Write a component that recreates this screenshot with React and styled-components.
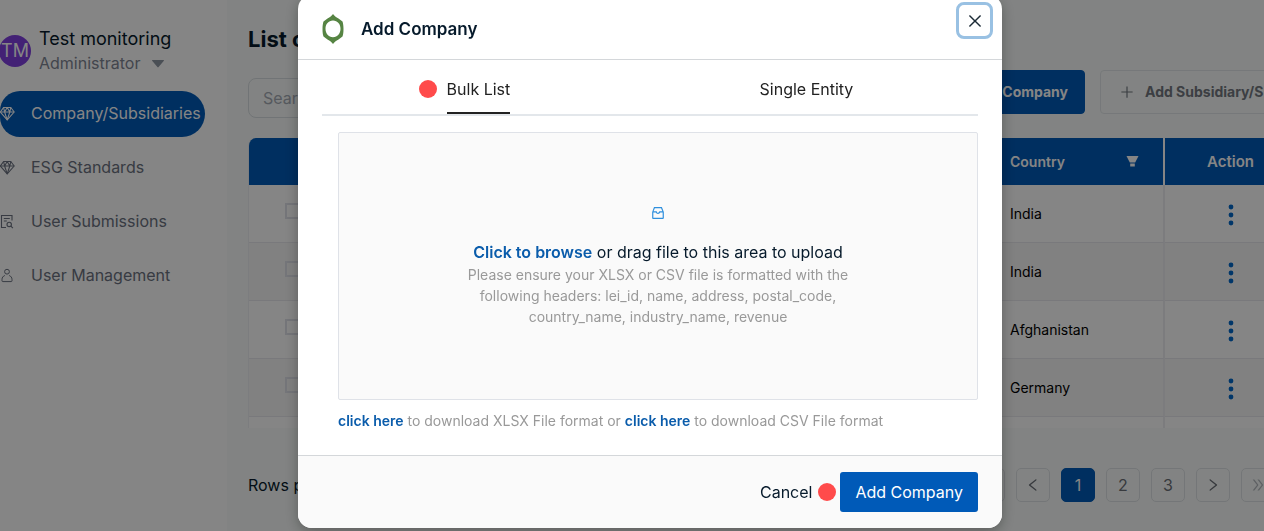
import React from "react";
import styled, { createGlobalStyle, css } from "styled-components";
import {
  AiOutlineInbox,
  AiOutlinePlus,
  AiOutlineLeft,
  AiOutlineRight,
  AiOutlineDoubleLeft,
  AiOutlineDoubleRight,
  AiOutlineClose,
} from "react-icons/ai";

const GlobalStyle = createGlobalStyle`
  *, *::before, *::after { box-sizing: border-box; }
  body {
    margin: 0;
    font-family: Inter, "Liberation Sans", sans-serif;
    font-size: 16px;
    line-height: 24px;
    color: #061a2b;
  }
  button, input { font: inherit; color: inherit; }
  p, h1, h2 { margin: 0; }
`;

const Viewport = styled.div`
  height: 100vh;
  overflow: hidden;
  background: #f9fcfb;
`;

const Shell = styled.div`
  display: flex;
  width: calc(100% + 34px);
  min-height: 100vh;
`;

const Sidebar = styled.aside`
  flex: none;
  width: 227px;
  padding-top: 26px;
  background: #fff;
`;

const Profile = styled.div`
  display: flex;
  align-items: center;
  gap: 8px;
`;

const Avatar = styled.span`
  flex: none;
  display: grid;
  place-items: center;
  width: 32px;
  height: 32px;
  margin-left: -1px;
  border-radius: 50%;
  background: #8040e0;
  color: #fff;
  font-size: 18px;
`;

const UserName = styled.p`
  font-size: 18px;
  line-height: 25px;
`;

const Role = styled.p`
  display: flex;
  align-items: center;
  gap: 12px;
  line-height: 25px;
  color: #7f8694;
`;

const Nav = styled.nav`
  display: flex;
  flex-direction: column;
  gap: 8px;
  margin-top: 15px;
`;

const NavLink = styled.a`
  display: flex;
  align-items: center;
  gap: 16px;
  width: 205px;
  height: 46px;
  padding-bottom: 2px;
  border-radius: 20px 23px 23px 20px;
  text-decoration: none;
  color: ${(p) => (p.$active ? "#fff" : "#6b7280")};
  background: ${(p) => (p.$active ? "#005ab8" : "transparent")};
  svg { flex: none; width: 15px; height: 15px; }
`;

const Main = styled.main`
  flex: 1;
  min-width: 0;
  padding: 24px 0 0 21px;
`;

const Toolbar = styled.div`
  display: flex;
  justify-content: space-between;
  align-items: flex-end;
`;

const PageTitle = styled.h1`
  font-size: 22px;
  line-height: 30px;
  font-weight: 700;
`;

const Search = styled.input`
  width: 280px;
  height: 40px;
  margin-top: 24px;
  padding: 0 14px;
  border: 1px solid #d9dfe3;
  border-radius: 8px;
  background: transparent;
  &::placeholder { color: #a5abb5; opacity: 1; }
`;

const Actions = styled.div`
  display: flex;
  gap: 15px;
  padding-bottom: 4px;
`;

const ToolButton = styled.button`
  display: flex;
  align-items: center;
  gap: 10px;
  height: 44px;
  padding: 0 16px;
  border-radius: 4px;
  font-size: 14px;
  font-weight: 700;
  white-space: nowrap;
  ${(p) =>
    p.$primary
      ? css`
          border: 1px solid #005ab8;
          background: #005ab8;
          color: #fff;
        `
      : css`
          width: 198px;
          padding-left: 18px;
          border: 1px solid #e3e7ea;
          background: transparent;
          color: #737880;
        `}
`;

const TableFrame = styled.div`
  height: 290px;
  margin-top: 20px;
  overflow: hidden;
  border-left: 1px solid #eef0f3;
  border-radius: 8px 0 0 0;
`;

const Table = styled.table`
  width: 100%;
  border-collapse: separate;
  border-spacing: 0;
  table-layout: fixed;
  font-size: 14px;
`;

const HeadCell = styled.th`
  height: 47px;
  width: ${(p) => p.$width || "auto"};
  padding: ${(p) => (p.$align === "center" ? "0" : "0 24px 0 8px")};
  background: #005ab8;
  color: #fff;
  font-weight: 600;
  font-size: ${(p) => (p.$align === "center" ? "15px" : "14px")};
  text-align: ${(p) => p.$align || "left"};
  border-right: 2px solid ${(p) => (p.$divided ? "#fff" : "#005ab8")};
`;

const HeadLabel = styled.span`
  display: flex;
  justify-content: space-between;
  align-items: center;
`;

const Row = styled.tr`
  background: ${(p) => (p.$striped ? "#f8f8f8" : "#fff")};
`;

const Cell = styled.td`
  height: 58px;
  padding: 0 8px;
  color: #000;
  border-right: 2px solid #eeeef2;
  border-bottom: 1px solid #e9e9ee;
  text-align: ${(p) => p.$align || "left"};
`;

const Check = styled.input`
  appearance: none;
  display: block;
  width: 16px;
  height: 16px;
  margin: 0 0 6px 28px;
  border: 2px solid #e0e2ea;
  background: transparent;
`;

const IconButton = styled.button`
  display: inline-grid;
  place-items: center;
  padding: 0;
  border: 0;
  background: none;
  color: #0068c9;
  vertical-align: middle;
`;

const Pager = styled.div`
  display: flex;
  align-items: center;
  justify-content: space-between;
  margin-top: 40px;
  padding-right: 23px;
`;

const Pages = styled.div`
  display: flex;
  gap: 11px;
`;

const PageButton = styled.button`
  display: grid;
  place-items: center;
  width: 34px;
  height: 34px;
  padding: 0;
  border: 1px solid ${(p) => (p.$active ? "#005ab8" : "#dfe2e6")};
  border-radius: 5px;
  background: ${(p) => (p.$active ? "#005ab8" : "transparent")};
  color: ${(p) => (p.$active ? "#fff" : p.$muted ? "#b4b8be" : "#6b6f77")};
`;

const Overlay = styled.div`
  position: fixed;
  inset: 0;
  display: flex;
  justify-content: center;
  align-items: flex-start;
  padding-left: 36px;
  overflow: hidden;
  background: rgba(0, 0, 0, 0.48);
`;

const Modal = styled.section`
  width: 704px;
  max-width: 100%;
  margin-top: -5px;
  border-radius: 14px;
  overflow: hidden;
  background: #fff;
  box-shadow: 0 4px 14px rgba(0, 0, 0, 0.3);
`;

const ModalHeader = styled.header`
  position: relative;
  display: flex;
  align-items: center;
  gap: 17px;
  height: 65px;
  padding: 3px 24px 0;
  border-bottom: 1px solid #d4d7da;
`;

const ModalTitle = styled.h2`
  font-size: 17px;
  font-weight: 600;
`;

const CloseButton = styled.button`
  position: absolute;
  top: 7px;
  right: 9px;
  display: grid;
  place-items: center;
  width: 37px;
  height: 37px;
  padding: 0;
  border: 3px solid #99c1e3;
  border-radius: 8px;
  background: #fff;
  color: #1c2b36;
`;

const ModalBody = styled.div`
  padding: 0 24px 24px;
`;

const Tabs = styled.div`
  display: flex;
  justify-content: space-around;
  height: 56px;
  border-bottom: 2px solid #e3e7eb;
`;

const Tab = styled.button`
  padding: 5px 0 0;
  border: 0;
  border-bottom: 2px solid ${(p) => (p.$active ? "#222" : "transparent")};
  background: none;
  color: #222;
`;

const Marked = styled.span`
  position: relative;
`;

const Marker = styled.i`
  position: absolute;
  top: 50%;
  right: calc(100% + ${(p) => p.$gap});
  width: 18px;
  height: 18px;
  margin-top: -9px;
  border-radius: 50%;
  background: #ff4b4b;
`;

const DropZone = styled.div`
  display: flex;
  flex-direction: column;
  align-items: center;
  height: 268px;
  margin: 16px 0 0 16px;
  padding-top: 72px;
  border: 1px solid #dfe2e8;
  border-radius: 2px;
  background: #fafafa;
  text-align: center;
`;

const DropTitle = styled.p`
  margin-top: 19px;
`;

const TextLink = styled.a`
  color: #0a5cab;
  font-weight: 600;
  text-decoration: none;
`;

const Hint = styled.p`
  font-size: 14px;
  line-height: 21px;
  color: #999;
`;

const Downloads = styled(Hint)`
  margin: 10px 0 0 16px;
`;

const ModalFooter = styled.footer`
  display: flex;
  justify-content: flex-end;
  align-items: center;
  gap: 28px;
  height: 73px;
  padding: 0 24px;
  border-top: 1px solid #d4d7da;
  background: #fafafa;
`;

const CancelButton = styled.button`
  padding: 0;
  border: 0;
  background: none;
`;

const SubmitButton = styled.button`
  position: relative;
  height: 40px;
  padding: 0 15px;
  border: 0;
  border-radius: 3px;
  background: #005ab8;
  color: #fff;
`;

const GemIcon = () => (
  <svg viewBox="0 0 15 15" fill="none" stroke="currentColor" strokeWidth="1.1" strokeLinejoin="round">
    <path d="M3.600 1.500h7.200L14.200 6 7.200 13.800.4 6z" />
    <path d="M.4 6h13.800M3.600 1.500L4.600 6l2.600 7.800L9.800 6l1-4.500M4.600 6l2.600-4.500L9.800 6" />
  </svg>
);

const FileSearchIcon = () => (
  <svg viewBox="0 0 15 15" fill="none" stroke="currentColor" strokeWidth="1.1">
    <path d="M6 13.500H1.500v-12h10.500V6.500" />
    <path d="M3.800 4.500h6M3.800 7h3" />
    <circle cx="9.200" cy="10.400" r="2.200" />
    <path d="M10.900 12.100l2 2" />
  </svg>
);

const PersonIcon = () => (
  <svg viewBox="0 0 15 15" fill="none" stroke="currentColor" strokeWidth="1">
    <circle cx="7" cy="3.700" r="2.400" />
    <path d="M4.800 7.500C3 8.200 2 9.600 2 11.500v1.300c0 .5.300.8.800.8h8.400c.5 0 .8-.3.800-.8v-1.300c0-1.900-1-3.300-2.800-4" />
  </svg>
);

const Caret = () => (
  <svg width="12" height="8" viewBox="0 0 12 8" fill="#8f97a3">
    <path d="M0.5 0h11a.5.5 0 0 1 .4.8L6.6 7.1a.8.8 0 0 1-1.2 0L.1.8A.5.5 0 0 1 .5 0z" />
  </svg>
);

const FunnelIcon = () => (
  <svg width="13" height="11" viewBox="0 0 13 11" fill="currentColor">
    <path d="M.5 0h12L9.200 6.500H3.800z" />
    <path d="M4.200 7.500h4.600v3H4.200z" />
  </svg>
);

const DotsIcon = () => (
  <svg width="6" height="22" viewBox="0 0 6 22" fill="currentColor">
    <circle cx="3" cy="3" r="2.4" />
    <circle cx="3" cy="11" r="2.4" />
    <circle cx="3" cy="19" r="2.4" />
  </svg>
);

const Logo = () => (
  <svg width="22" height="30" viewBox="0 0 22 30">
    <path
      fill="#568443"
      fillRule="evenodd"
      d="M11 0c1.300 2 3 3.200 5.500 4.500L20.500 7.500C21.200 9.500 21.500 12 21.500 15s-.3 5.500-1 7.500l-4 3C14 26.800 12.300 28 11 30c-1.300-2-3-3.200-5.500-4.500l-4-3C.8 20.500.5 18 .5 15s.3-5.500 1-7.500l4-3C8 3.200 9.700 2 11 0zM11 6.500c-4.500 0-7.500 3.600-7.500 8.300S6.500 23.200 11 23.200s7.500-3.700 7.500-8.400S15.500 6.500 11 6.500z"
    />
  </svg>
);

const navItems = [
  { label: "Company/Subsidiaries", Icon: GemIcon, active: true },
  { label: "ESG Standards", Icon: GemIcon },
  { label: "User Submissions", Icon: FileSearchIcon },
  { label: "User Management", Icon: PersonIcon },
];

const countries = ["India", "India", "Afghanistan", "Germany", ""];

export default function App() {
  return (
    <>
      <GlobalStyle />
      <Viewport>
        <Shell>
          <Sidebar>
            <Profile>
              <Avatar>TM</Avatar>
              <div>
                <UserName>Test monitoring</UserName>
                <Role>
                  Administrator <Caret />
                </Role>
              </div>
            </Profile>
            <Nav>
              {navItems.map(({ label, Icon, active }) => (
                <NavLink key={label} href="#" $active={active}>
                  <Icon />
                  {label}
                </NavLink>
              ))}
            </Nav>
          </Sidebar>
          <Main>
            <Toolbar>
              <div>
                <PageTitle>List of Companies</PageTitle>
                <Search placeholder="Search" aria-label="Search" />
              </div>
              <Actions>
                <ToolButton $primary>
                  <AiOutlinePlus />
                  Add Company
                </ToolButton>
                <ToolButton>
                  <AiOutlinePlus size={16} />
                  Add Subsidiary/S
                </ToolButton>
              </Actions>
            </Toolbar>
            <TableFrame>
              <Table>
                <thead>
                  <tr>
                    <HeadCell aria-label="Selection" />
                    <HeadCell $width="163px" $divided>
                      <HeadLabel>
                        Country <FunnelIcon />
                      </HeadLabel>
                    </HeadCell>
                    <HeadCell $width="133px" $align="center">
                      Action
                    </HeadCell>
                  </tr>
                </thead>
                <tbody>
                  {countries.map((country, i) => (
                    <Row key={i} $striped={i % 2 === 1}>
                      <Cell>
                        <Check type="checkbox" aria-label={`Select row ${i + 1}`} />
                      </Cell>
                      <Cell>{country}</Cell>
                      <Cell $align="center">
                        <IconButton aria-label="Row actions">
                          <DotsIcon />
                        </IconButton>
                      </Cell>
                    </Row>
                  ))}
                </tbody>
              </Table>
            </TableFrame>
            <Pager>
              <span>Rows per page</span>
              <Pages>
                <PageButton aria-label="First page">
                  <AiOutlineDoubleLeft />
                </PageButton>
                <PageButton aria-label="Previous page">
                  <AiOutlineLeft />
                </PageButton>
                <PageButton $active>1</PageButton>
                <PageButton>2</PageButton>
                <PageButton>3</PageButton>
                <PageButton aria-label="Next page">
                  <AiOutlineRight />
                </PageButton>
                <PageButton aria-label="Last page" $muted>
                  <AiOutlineDoubleRight />
                </PageButton>
              </Pages>
            </Pager>
          </Main>
        </Shell>
      </Viewport>
      <Overlay>
        <Modal role="dialog" aria-labelledby="modal-title">
          <ModalHeader>
            <Logo />
            <ModalTitle id="modal-title">Add Company</ModalTitle>
            <CloseButton aria-label="Close">
              <AiOutlineClose size={18} />
            </CloseButton>
          </ModalHeader>
          <ModalBody>
            <Tabs role="tablist">
              <Tab role="tab" aria-selected="true" $active>
                <Marked>
                  Bulk List
                  <Marker $gap="10px" />
                </Marked>
              </Tab>
              <Tab role="tab" aria-selected="false">
                Single Entity
              </Tab>
            </Tabs>
            <DropZone>
              <AiOutlineInbox size={16} color="#2f8fdd" />
              <DropTitle>
                <TextLink href="#">Click to browse</TextLink> or drag file to this area to upload
              </DropTitle>
              <Hint>
                Please ensure your XLSX or CSV file is formatted with the
                <br />
                following headers: lei_id, name, address, postal_code,
                <br />
                country_name, industry_name, revenue
              </Hint>
            </DropZone>
            <Downloads>
              <TextLink href="#">click here</TextLink> to download XLSX File format or{" "}
              <TextLink href="#">click here</TextLink> to download CSV File format
            </Downloads>
          </ModalBody>
          <ModalFooter>
            <CancelButton>Cancel</CancelButton>
            <SubmitButton>
              Add Company
              <Marker $gap="4px" />
            </SubmitButton>
          </ModalFooter>
        </Modal>
      </Overlay>
    </>
  );
}
